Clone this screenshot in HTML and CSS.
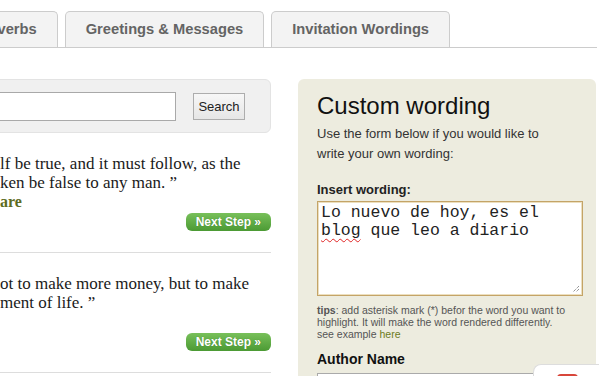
FILE: index.html
```html
<!DOCTYPE html>
<html lang="en">
<head>
    <meta charset="UTF-8">
    <meta name="viewport" content="width=device-width, initial-scale=1.0">
    <title>Custom wording</title>
    <link rel="stylesheet" href="styles.css">
</head>
<body>

<div class="page">
    <ul class="tabs">
        <li>Proverbs</li>
        <li>Greetings &amp; Messages</li>
        <li>Invitation Wordings</li>
    </ul>

    <div class="content">
        <div class="quotes">
            <form class="search">
                <input type="text" class="search-input">
                <button type="button" class="search-btn">Search</button>
            </form>

            <div class="quote">
                <div class="quote-text">
                    <div class="ln"><span class="cut">“This above all: to thine own se</span>lf be true, and it must follow, as the</div>
                    <div class="ln"><span class="cut">night the day, thou canst not ta</span>ken be false to any man. ”</div>
                    <div class="ln author"><span class="cut">William Shakesp</span>are</div>
                </div>
                <div class="next"><a class="next-btn" href="#">Next Step »</a></div>
            </div>

            <div class="quote">
                <div class="quote-text">
                    <div class="ln"><span class="cut">“The purpose of life is n</span>ot to make more money, but to make</div>
                    <div class="ln"><span class="cut">the most of the enjoy</span>ment of life. ”</div>
                    <div class="ln author"><span class="cut">Unknown</span></div>
                </div>
                <div class="next"><a class="next-btn" href="#">Next Step »</a></div>
            </div>
        </div>

        <div class="custom">
            <h2>Custom wording</h2>
            <p class="intro">Use the form below if you would like to write your own wording:</p>

            <div class="label">Insert wording:</div>
            <div class="wording" contenteditable="true">Lo nuevo de hoy, es el <span class="typo">blog</span> que leo a diario
                <svg class="grip" width="9" height="9" viewBox="0 0 9 9">
                    <path d="M8 2L2 8M8 5L5 8" stroke="#666" stroke-width="1" stroke-dasharray="1 1"/>
                </svg>
            </div>

            <p class="tips"><b>tips</b>: add asterisk mark (*) befor the word you want to highlight. It will make the word rendered differently.<br>see example <a href="#">here</a></p>

            <div class="label author-label">Author Name</div>
            <input type="text" class="author-input">
        </div>
    </div>
</div>

<div class="feedback"><span class="feedback-btn"></span></div>

</body>
</html>
```

FILE: styles.css
```css
body {
    margin: 0;
    font-family: "Liberation Sans", Arial, sans-serif;
    color: #333;
    background-color: #fff;
    overflow: hidden;
}

/* page is scrolled sideways, left part is off screen */
.page {
    width: 897px;
    margin-left: -300px;
}

.tabs {
    display: flex;
    gap: 7px;
    list-style: none;
    margin: 0;
    padding: 11px 0 0 252px;
    border-bottom: 1px solid #ccc;
}

.tabs li {
    height: 35px;
    line-height: 35px;
    padding: 0 20px;
    border: 1px solid #ccc;
    border-bottom: 0;
    border-radius: 5px 5px 0 0;
    background-color: #f3f3f3;
    color: #646464;
    font-size: 14.7px;
    font-weight: bold;
}

.content {
    display: flex;
    gap: 27px;
    padding-top: 31px;
}

.quotes {
    width: 571px;
}

.search {
    display: flex;
    align-items: center;
    height: 52px;
    margin: 0;
    padding: 0 25px 0 20px;
    background-color: #f0f0f0;
    border: 1px solid #e3e3e3;
    border-radius: 6px;
}

.search-input {
    flex: 1;
    height: 29px;
    box-sizing: border-box;
    margin: 0 17px 0 0;
    border: 1px solid #a9a9a9;
    background: #fff;
}

.search-btn {
    width: 52px;
    height: 27px;
    padding: 0;
    border: 1px solid #adadad;
    background: linear-gradient(#f7f7f7, #e6e6e6);
    font-family: "Liberation Sans", Arial, sans-serif;
    font-size: 13px;
    color: #222;
}

.quote {
    padding: 21px 0;
    border-bottom: 1px solid #ddd;
}

.quote-text {
    font-family: "Liberation Serif", Georgia, serif;
    font-size: 17px;
    line-height: 19px;
    color: #1a1a1a;
}

.ln {
    display: flex;
    white-space: nowrap;
}

.cut {
    flex: none;
    width: 300px;
    overflow: hidden;
    text-align: right;
}

.author {
    color: #5d6b22;
    font-weight: bold;
    font-size: 16px;
}

.next {
    display: flex;
    justify-content: flex-end;
    margin-top: 2px;
}

.next-btn {
    display: block;
    height: 18px;
    line-height: 18px;
    padding: 0 10px;
    border-radius: 6px;
    background: linear-gradient(#78c05a, #4b9a34);
    color: #fff;
    font-size: 12px;
    font-weight: bold;
    text-decoration: none;
    text-shadow: 0 0 1px rgba(0, 60, 0, 0.4);
}

.custom {
    width: 298px;
    box-sizing: border-box;
    padding: 13px 12px 0 19px;
    background-color: #edecdf;
    border-radius: 6px;
}

.custom h2 {
    margin: 0 0 4px;
    font-size: 24px;
    line-height: 28px;
    font-weight: normal;
    color: #111;
}

.intro {
    max-width: 250px;
    margin: 0;
    font-size: 13px;
    line-height: 20px;
    color: #333;
}

.label {
    margin: 17px 0 2px;
    font-size: 13px;
    line-height: 18px;
    font-weight: bold;
    color: #222;
}

.wording {
    position: relative;
    width: 266px;
    height: 95px;
    box-sizing: border-box;
    padding: 2px 3px;
    border: 1px solid #c4a467;
    box-shadow: inset 0 0 0 1px #ecdfbf;
    background-color: #fff;
    font-family: "Liberation Mono", "Courier New", monospace;
    font-size: 16.5px;
    line-height: 18px;
    color: #222;
    outline: none;
}

.typo {
    text-decoration: underline wavy #e02424;
    text-decoration-thickness: 1px;
    text-underline-offset: 3px;
}

.grip {
    position: absolute;
    right: 2px;
    bottom: 2px;
}

.tips {
    margin: 8px 0 0;
    font-size: 10.5px;
    line-height: 12px;
    color: #555;
}

.tips a {
    color: #6b7b1d;
    text-decoration: none;
}

.author-label {
    margin: 10px 0 5px;
    font-size: 14px;
    color: #111;
}

.author-input {
    display: block;
    width: 266px;
    height: 25px;
    box-sizing: border-box;
    border: 1px solid #aaa;
    background: #fff;
}

.feedback {
    position: fixed;
    right: 0;
    bottom: 0;
    width: 66px;
    height: 12px;
    padding: 9px 0 0 23px;
    box-sizing: border-box;
    background-color: #fff;
    border: 1px solid #ddd;
    border-right: 0;
    border-bottom: 0;
    border-top-left-radius: 8px;
}

.feedback-btn {
    display: block;
    width: 21px;
    height: 4px;
    border-radius: 4px 4px 0 0;
    background-color: #d8463a;
}
```
